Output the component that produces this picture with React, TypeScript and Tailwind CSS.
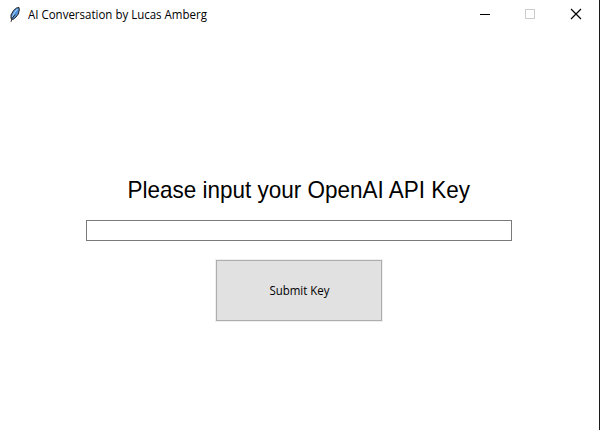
export default function App() {
  return (
    <div className="flex h-[430px] w-[600px] flex-col overflow-hidden border-r border-[#1a1a1a] bg-white font-['Open_Sans','Noto_Sans',sans-serif] text-black">
      <header className="flex h-[30px] shrink-0 items-center">
        <svg className="ml-[7px] h-4 w-4" viewBox="0 0 16 16">
          <path d="M4 11.5 4 8 6.5 3.5 9.5 1 12 .5 12.3 3 11.3 7 9 10 6 12.5Z" fill="#4d91db" stroke="#222" strokeWidth="1" />
          <path d="M5.5 10 7.5 5.5 10.5 2" fill="none" stroke="#b9dcff" strokeWidth="1" />
          <path d="M4 14.8 5 11.5 8 7.5" fill="none" stroke="#222" strokeWidth="1" />
        </svg>
        <h1 className="ml-[5px] origin-left scale-x-[0.958] whitespace-nowrap text-[12px] leading-[16px]">AI Conversation by Lucas Amberg</h1>
        <div className="ml-auto flex h-[30px]">
          <svg width="137" height="30" viewBox="462 0 137 30" fill="none" shapeRendering="crispEdges">
            <path d="M480 14.5H490" stroke="#000" />
            <rect x="525.5" y="9.5" width="9" height="9" stroke="#ccc" />
            <path d="m571 9 10 10m0-10-10 10" stroke="#000" strokeWidth="1.2" shapeRendering="auto" />
          </svg>
        </div>
      </header>
      <main className="flex w-[598px] flex-col items-center pt-[145px]">
        <label htmlFor="key" className="scale-x-[0.937] whitespace-nowrap font-['Liberation_Sans',sans-serif] text-[24px] leading-[30px]">
          Please input your OpenAI API Key
        </label>
        <input id="key" className="mt-[15px] h-[21px] w-[426px] border border-[#7a7a7a] bg-white px-1 text-[12px] outline-none" />
        <button className="mt-[19px] flex h-[61px] w-[166px] items-center justify-center border border-[#adadad] bg-[#e1e1e1] text-[12px] leading-[16px] ring-1 ring-[#efefef]">
          <span className="inline-block scale-x-[0.955]">Submit Key</span>
        </button>
      </main>
    </div>
  );
}
